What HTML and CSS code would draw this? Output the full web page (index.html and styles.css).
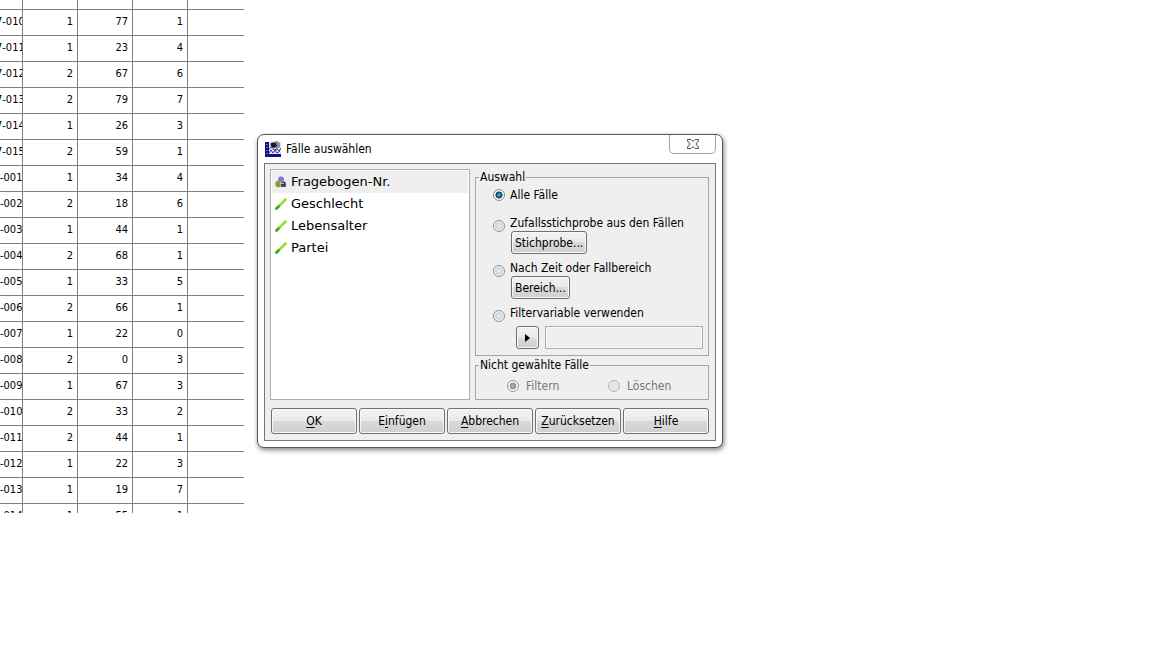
FILE: index.html
```html
<!DOCTYPE html>
<html lang="de">
<head>
    <meta charset="UTF-8">
    <title>Fälle auswählen</title>
    <link rel="stylesheet" href="styles.css">
</head>
<body>
    <div class="sheet">
        <table>
            <colgroup>
                <col class="col-id">
                <col class="col-value">
                <col class="col-value">
                <col class="col-value">
                <col>
            </colgroup>
            <tbody class="group-a">
                <tr><td></td><td></td><td></td><td></td><td></td></tr>
                <tr><td>7-010</td><td>1</td><td>77</td><td>1</td><td></td></tr>
                <tr><td>7-011</td><td>1</td><td>23</td><td>4</td><td></td></tr>
                <tr><td>7-012</td><td>2</td><td>67</td><td>6</td><td></td></tr>
                <tr><td>7-013</td><td>2</td><td>79</td><td>7</td><td></td></tr>
                <tr><td>7-014</td><td>1</td><td>26</td><td>3</td><td></td></tr>
                <tr><td>7-015</td><td>2</td><td>59</td><td>1</td><td></td></tr>
            </tbody>
            <tbody>
                <tr><td>-001</td><td>1</td><td>34</td><td>4</td><td></td></tr>
                <tr><td>-002</td><td>2</td><td>18</td><td>6</td><td></td></tr>
                <tr><td>-003</td><td>1</td><td>44</td><td>1</td><td></td></tr>
                <tr><td>-004</td><td>2</td><td>68</td><td>1</td><td></td></tr>
                <tr><td>-005</td><td>1</td><td>33</td><td>5</td><td></td></tr>
                <tr><td>-006</td><td>2</td><td>66</td><td>1</td><td></td></tr>
                <tr><td>-007</td><td>1</td><td>22</td><td>0</td><td></td></tr>
                <tr><td>-008</td><td>2</td><td>0</td><td>3</td><td></td></tr>
                <tr><td>-009</td><td>1</td><td>67</td><td>3</td><td></td></tr>
                <tr><td>-010</td><td>2</td><td>33</td><td>2</td><td></td></tr>
                <tr><td>-011</td><td>2</td><td>44</td><td>1</td><td></td></tr>
                <tr><td>-012</td><td>1</td><td>22</td><td>3</td><td></td></tr>
                <tr><td>-013</td><td>1</td><td>19</td><td>7</td><td></td></tr>
                <tr><td>-014</td><td>1</td><td>55</td><td>1</td><td></td></tr>
            </tbody>
        </table>
    </div>

    <form class="dialog" role="dialog" aria-labelledby="dialogTitle">
        <div class="titlebar">
            <svg class="app-icon" width="16" height="16" viewBox="0 0 16 16">
                <rect y="1" width="16" height="15" fill="#e4e4ee"/>
                <path d="M0 1h4v15H0zM0 13h16v3H0z" fill="#10108c"/>
                <path d="M1 3h2v1H1zM1 6h2v1H1zM1 9h2v1H1zM1 12h2v1H1z" fill="#6c6cc0"/>
                <path d="M5 3l2-2 5-1 3 2v4l-3 2-3-2-3 1z" fill="#8a8f98"/>
                <path d="M6 2h5l1 3-3 2-3-2z" fill="#14143c"/>
                <path d="M4 8l3-2 2 3 3-1 2 2 2-3" fill="none" stroke="#33338f"/>
                <path d="M4 12l2-3 2 3 2-3 2 3 3-2" fill="none" stroke="#33338f"/>
            </svg>
            <span id="dialogTitle">Fälle auswählen</span>
            <button type="button" class="close-btn" aria-label="Schließen">
                <svg width="12" height="10" viewBox="0 0 12 10">
                    <path d="M.5.5h3.500l2 2 2-2h3.500V2L9 5l2.500 3v1.500H8l-2-2-2 2H.5V8L3 5 .5 2z" fill="#f6f6f6" stroke="#535666"/>
                </svg>
            </button>
        </div>

        <div class="panel">
            <div class="columns">
                <ul class="variables" role="listbox" aria-label="Variablen">
                    <li role="option" aria-selected="true" class="selected">
                        <svg width="12" height="12" viewBox="0 0 12 12">
                            <circle cx="6" cy="3.500" r="3" fill="#8a70d6"/>
                            <circle cx="3.500" cy="8" r="3.200" fill="#84a52b"/>
                            <circle cx="8.500" cy="8" r="3.200" fill="#d8d8dc"/>
                            <path d="M6.500 6.500q3.500-1 3.500 1V11M10 8.500q-3.500-.5-3.500 1t3.500 0" fill="none" stroke="#33344a" stroke-width="1.400"/>
                        </svg>
                        Fragebogen-Nr.
                    </li>
                    <li role="option" aria-selected="false">
                        <svg width="12" height="12" viewBox="0 0 12 12">
                            <path d="M1.500 10.500l9-9" stroke="#8fd62a" stroke-width="2.500" stroke-linecap="round"/>
                            <path d="M1.500 10.500l2-2" stroke="#35a835" stroke-width="2.500" stroke-linecap="round"/>
                            <path d="M5 6.500l5-5" stroke="#d3e83c"/>
                        </svg>
                        Geschlecht
                    </li>
                    <li role="option" aria-selected="false">
                        <svg width="12" height="12" viewBox="0 0 12 12">
                            <path d="M1.500 10.500l9-9" stroke="#8fd62a" stroke-width="2.500" stroke-linecap="round"/>
                            <path d="M1.500 10.500l2-2" stroke="#35a835" stroke-width="2.500" stroke-linecap="round"/>
                            <path d="M5 6.500l5-5" stroke="#d3e83c"/>
                        </svg>
                        Lebensalter
                    </li>
                    <li role="option" aria-selected="false">
                        <svg width="12" height="12" viewBox="0 0 12 12">
                            <path d="M1.500 10.500l9-9" stroke="#8fd62a" stroke-width="2.500" stroke-linecap="round"/>
                            <path d="M1.500 10.500l2-2" stroke="#35a835" stroke-width="2.500" stroke-linecap="round"/>
                            <path d="M5 6.500l5-5" stroke="#d3e83c"/>
                        </svg>
                        Partei
                    </li>
                </ul>

                <div class="options">
                    <fieldset class="selection">
                        <legend>Auswahl</legend>
                        <div class="option first">
                            <input type="radio" id="all" name="selection" checked>
                            <label for="all">Alle Fälle</label>
                        </div>
                        <div class="option">
                            <input type="radio" id="sample" name="selection">
                            <label for="sample">Zufallsstichprobe aus den Fällen</label>
                            <button type="button">Stichprobe...</button>
                        </div>
                        <div class="option">
                            <input type="radio" id="range" name="selection">
                            <label for="range">Nach Zeit oder Fallbereich</label>
                            <button type="button">Bereich...</button>
                        </div>
                        <div class="option">
                            <input type="radio" id="filter" name="selection">
                            <label for="filter">Filtervariable verwenden</label>
                            <div class="filter-row">
                                <button type="button" class="arrow-btn" aria-label="Variable übernehmen">
                                    <svg width="5" height="8" viewBox="0 0 5 8"><path d="M0 0l5 4-5 4z"/></svg>
                                </button>
                                <input type="text" aria-label="Filtervariable" readonly>
                            </div>
                        </div>
                    </fieldset>

                    <fieldset disabled>
                        <legend>Nicht gewählte Fälle</legend>
                        <div class="choices">
                            <div class="choice">
                                <input type="radio" id="filtered" name="unselected" checked>
                                <label for="filtered">Filtern</label>
                            </div>
                            <div class="choice">
                                <input type="radio" id="deleted" name="unselected">
                                <label for="deleted">Löschen</label>
                            </div>
                        </div>
                    </fieldset>
                </div>
            </div>

            <div class="actions">
                <button type="submit"><u>O</u>K</button>
                <button type="button">E<u>i</u>nfügen</button>
                <button type="button"><u>A</u>bbrechen</button>
                <button type="reset"><u>Z</u>urücksetzen</button>
                <button type="button"><u>H</u>ilfe</button>
            </div>
        </div>
    </form>
</body>
</html>
```

FILE: styles.css
```css
* {
    box-sizing: border-box;
}
body {
    display: flex;
    align-items: flex-start;
    gap: 13px;
    margin: 0;
    background: #fff;
    color: #000;
    font: 12px/16px "DejaVu Sans Condensed", "Noto Sans", sans-serif;
}

/* data sheet */
.sheet {
    width: 244px;
    max-height: 513px;
    overflow: hidden;
}
table {
    width: 100%;
    margin-top: -16px;
    table-layout: fixed;
    border-collapse: separate;
    border-spacing: 0;
    font-size: 11px;
}
.col-id {
    width: 23px;
}
.col-value {
    width: 55px;
}
td {
    height: 26px;
    padding: 0 4px 1px 0;
    border-right: 1px solid #808080;
    border-bottom: 1px solid #808080;
    text-align: right;
    white-space: nowrap;
    overflow: hidden;
}
td:first-child {
    padding-right: 0;
    text-align: left;
}
.group-a td:first-child {
    text-indent: -4px;
}
td:last-child {
    border-right: none;
}

/* dialog window */
.dialog {
    width: 466px;
    margin-top: 134px;
    padding: 0 6px 6px;
    border: 1px solid #555;
    border-radius: 7px;
    background: #fff;
    box-shadow: 1px 2px 5px rgba(0, 0, 0, 0.5);
}
.titlebar {
    display: flex;
    align-items: center;
    gap: 5px;
    height: 28px;
    padding-left: 1px;
}
.app-icon {
    flex: none;
}
.panel {
    padding: 5px 6px 6px 5px;
    border: 1px solid #777;
    background: #efefef;
}
.columns {
    display: grid;
    grid-template-columns: 200px minmax(0, 1fr);
    gap: 5px;
}
.variables {
    margin: 0;
    padding: 1px;
    border: 1px solid #abadb3;
    background: #fff;
    list-style: none;
    font: 13px/22px "DejaVu Sans", sans-serif;
}
.variables li {
    display: flex;
    align-items: center;
    gap: 4px;
    height: 22px;
    padding-left: 3px;
}
.variables .selected {
    background: #efefef;
}

/* option groups */
.options {
    display: flex;
    flex-direction: column;
    gap: 1px;
}
fieldset {
    min-width: 0;
    margin: 0;
    padding: 0;
    border: 1px solid #a5a5a5;
}
legend {
    margin-left: 3px;
    padding: 0 1px;
}
.selection {
    padding: 2px 5px 6px 0;
}
.option {
    display: grid;
    grid-template-columns: 12px minmax(0, 1fr);
    align-items: start;
    column-gap: 5px;
    margin-bottom: 6px;
    padding-left: 17px;
}
.option:last-child {
    margin-bottom: 0;
}
.option.first {
    margin-bottom: 12px;
}
.option > button {
    grid-column: 2;
    justify-self: start;
    height: 23px;
    margin-left: 1px;
    padding: 0 3px;
}
input[type="radio"] {
    appearance: none;
    width: 12px;
    height: 12px;
    margin: 0;
    border: 1px solid #8e8f8f;
    border-radius: 50%;
    background: radial-gradient(circle, #e8e8ea 10%, #cfd2d6 50%, #f4f4f4 56%);
}
input[type="radio"]:checked {
    background: radial-gradient(circle, #6cc8ea 5%, #1c78a8 22%, #123a5c 46%, #f4f4f4 54%);
}
input[type="radio"]:disabled {
    border-color: #b5b5b5;
    background: #e6e6e6;
}
input[type="radio"]:disabled:checked {
    border-color: #999;
    background: radial-gradient(circle, #aaa 10%, #8e8e8e 42%, #f4f4f4 52%);
}
.option > input[type="radio"] {
    margin: 5px 0 -1px;
}
.option.first > input[type="radio"] {
    margin: 2px 0 0;
}
.filter-row {
    grid-column: 2;
    display: flex;
    gap: 6px;
    margin-top: 5px;
    padding-left: 6px;
}
.filter-row input {
    flex: 1;
    min-width: 0;
    height: 23px;
    border: 1px solid #abadb3;
    background: #efefef;
    box-shadow: inset 0 0 0 1px #f8f8f8;
}
.choices {
    display: grid;
    grid-template-columns: 101px 1fr;
    padding: 3px 5px 3px 31px;
}
.choice {
    display: flex;
    align-items: center;
    height: 20px;
    gap: 7px;
    color: #777;
}

/* buttons */
button {
    padding: 0;
    border: 1px solid #707070;
    border-radius: 3px;
    background: linear-gradient(#f2f2f2, #e9e9e9 50%, #dadada 50%, #cfcfcf);
    box-shadow: inset 0 0 0 1px #f8f8f8;
    color: #000;
    font: inherit;
    white-space: nowrap;
}
.close-btn {
    display: flex;
    align-items: center;
    justify-content: center;
    align-self: flex-start;
    width: 47px;
    height: 19px;
    margin-left: auto;
    border: 1px solid #a4a4a4;
    border-top: none;
    border-radius: 0 0 5px 5px;
    background: #fff;
    box-shadow: none;
}
.arrow-btn {
    width: 23px;
    height: 23px;
}
.arrow-btn svg {
    display: block;
    margin: auto;
}
.actions {
    display: grid;
    grid-template-columns: repeat(5, 1fr);
    gap: 2px;
    margin-top: 8px;
    padding-left: 1px;
}
.actions button {
    height: 26px;
}
u {
    text-underline-offset: 2px;
}
```
